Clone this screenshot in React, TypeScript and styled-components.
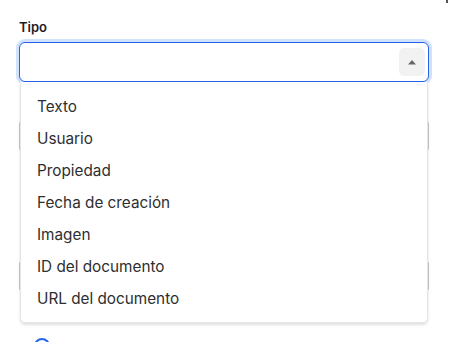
import styled, { createGlobalStyle } from "styled-components";

const GlobalStyle = createGlobalStyle`
  html, body {
    margin: 0;
    padding: 0;
    background: #ffffff;
    font-family: Inter, "Noto Sans", sans-serif;
  }
`;

const Page = styled.div`
  position: relative;
  width: 449px;
  height: 342px;
  overflow: hidden;
  background: #ffffff;
`;

const Form = styled.div`
  display: flex;
  flex-direction: column;
  padding: 19px 20px 0 19px;
`;

const Field = styled.div<{ $gap?: number }>`
  display: flex;
  flex-direction: column;
  gap: 6px;
  margin-bottom: ${(p) => p.$gap ?? 0}px;
`;

const Label = styled.label`
  font-size: 13px;
  font-weight: 600;
  line-height: 17px;
  color: #1d1d1f;
`;

const SelectBox = styled.div<{ $focused?: boolean }>`
  display: flex;
  align-items: center;
  justify-content: flex-end;
  box-sizing: border-box;
  height: 40px;
  padding: 0 3px;
  border-radius: 6px;
  border: 1px solid ${(p) => (p.$focused ? "#2563eb" : "#cfcfd4")};
  box-shadow: ${(p) => (p.$focused ? "0 0 0 3px #d3e2fc" : "none")};
  background: #fff;
`;

const PlainInput = styled.div<{ $gap?: number }>`
  box-sizing: border-box;
  height: 34px;
  margin-bottom: ${(p) => p.$gap ?? 0}px;
  border-radius: 5px;
  border: 1px solid #c8c8cc;
`;

const CaretButton = styled.div`
  display: flex;
  align-items: center;
  justify-content: center;
  width: 26px;
  height: 28px;
  border-radius: 5px;
  background: #f2f2f3;
`;

const Radio = styled.div`
  width: 12px;
  height: 12px;
  margin-left: 15px;
  border-radius: 50%;
  border: 2px solid #2563eb;
`;

const Menu = styled.ul`
  position: absolute;
  top: 82px;
  left: 20px;
  width: 408px;
  margin: 0;
  padding: 8px 0;
  list-style: none;
  box-sizing: border-box;
  background: #fff;
  border-radius: 0 0 5px 5px;
  border: 1px solid #e6e6e8;
  border-top: none;
  box-shadow: 0 2px 3px rgba(0, 0, 0, 0.12);
`;

const Option = styled.li`
  display: flex;
  align-items: center;
  height: 32px;
  padding: 0 16px;
  font-size: 15.3px;
  color: #2e2e30;
`;

const CloseMark = styled.div`
  position: absolute;
  top: 0;
  right: 1px;
  width: 2px;
  height: 3px;
  background: #555;
`;

const options = [
  "Texto",
  "Usuario",
  "Propiedad",
  "Fecha de creación",
  "Imagen",
  "ID del documento",
  "URL del documento",
];

export default function App() {
  return (
    <Page>
      <GlobalStyle />
      <CloseMark />
      <Form>
        <Field $gap={37}>
          <Label>Tipo</Label>
          <SelectBox $focused>
            <CaretButton>
              <svg width="10" height="6" viewBox="0 0 10 6">
                <path d="M1 5.5 L5 1 L9 5.5 Z" fill="#666" />
              </svg>
            </CaretButton>
          </SelectBox>
        </Field>
        <PlainInput $gap={106} />
        <PlainInput $gap={45} />
        <Radio />
      </Form>
      <Menu>
        {options.map((o) => (
          <Option key={o}>{o}</Option>
        ))}
      </Menu>
    </Page>
  );
}
